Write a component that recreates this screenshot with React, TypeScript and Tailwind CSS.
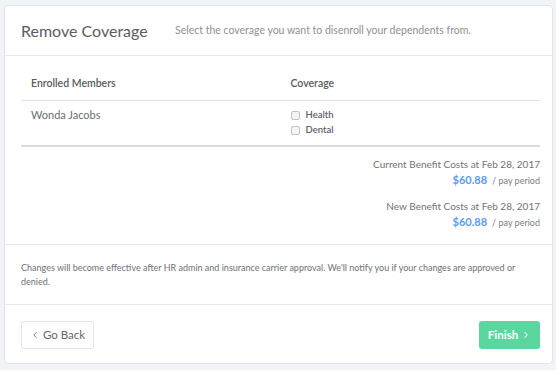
import { ChevronLeft, ChevronRight } from "lucide-react";

const CostLine = ({ label, amount }: { label: string; amount: string }) => (
  <div className="flex flex-col items-end">
    <div className="text-[10px] leading-[16px] text-[#707378]">{label}</div>
    <div className="flex items-baseline gap-[5px] leading-[16px]">
      <span className="text-[11px] font-bold text-[#5b9cf2]">{amount}</span>
      <span className="text-[9px] text-[#7b7d81]">/ pay period</span>
    </div>
  </div>
);

const Check = ({ label }: { label: string }) => (
  <label className="flex items-center gap-[6px] h-[15px]">
    <span className="w-[9px] h-[9px] rounded-[2px] border border-[#bfc2c6] bg-[#f3f4f6]" />
    <span className="text-[9.5px] font-semibold text-[#5d6068]">{label}</span>
  </label>
);

export default function App() {
  return (
    <div
      className="min-h-[370px] bg-[#f1f4f7] pt-[5px] pl-[4px] pr-[3px] pb-[7px]"
      style={{ fontFamily: "Lato, 'Open Sans', sans-serif" }}
    >
      <div className="bg-white rounded-[4px] border border-[#e1e4e8] flex flex-col">
        {/* header */}
        <div className="h-[50px] flex items-center pl-[16px] border-b border-[#e8eaed]">
          <h1 className="text-[16px] text-[#5a5d62] w-[154px]">Remove Coverage</h1>
          <p className="text-[10.5px] text-[#8d9095]">
            Select the coverage you want to disenroll your dependents from.
          </p>
        </div>

        {/* table + costs */}
        <div className="pl-[16px] pr-[12px] pt-[20px] pb-[13px]">
          <div className="grid grid-cols-2 border-b border-[#e1e3e6] pb-[8px]">
            <div className="pl-[10px] text-[10.5px] font-semibold text-[#585b60]">Enrolled Members</div>
            <div className="pl-[10px] text-[10.5px] font-semibold text-[#585b60]">Coverage</div>
          </div>
          <div className="grid grid-cols-2 border-b-2 border-[#d9dbdf] pt-[6px] pb-[7px]">
            <div className="pl-[10px] text-[11px] text-[#6a6d72] leading-[15px]">Wonda Jacobs</div>
            <div className="pl-[10px] pt-[1px] flex flex-col">
              <Check label="Health" />
              <Check label="Dental" />
            </div>
          </div>
          <div className="flex flex-col gap-[9px] pt-[9px]">
            <CostLine label="Current Benefit Costs at Feb 28, 2017" amount="$60.88" />
            <CostLine label="New Benefit Costs at Feb 28, 2017" amount="$60.88" />
          </div>
        </div>

        {/* notice */}
        <div className="border-y border-[#e8eaed] pl-[16px] pr-[20px] pt-[16px] pb-[15px]">
          <p className="text-[9px] leading-[14px] text-[#6e7176]">
            Changes will become effective after HR admin and insurance carrier approval. We'll notify you if your
            changes are approved or denied.
          </p>
        </div>

        {/* footer */}
        <div className="flex justify-between pl-[16px] pr-[12px] pt-[16px] pb-[14px]">
          <button className="h-[28px] w-[73px] rounded-[3px] border border-[#e1e4e8] flex items-center justify-center gap-[3px] text-[11.5px] text-[#62656a]">
            <ChevronLeft size={10} strokeWidth={2} />
            Go Back
          </button>
          <button className="h-[28px] w-[61px] rounded-[3px] bg-[#5cd69f] flex items-center justify-center gap-[3px] text-[11.5px] font-bold text-white">
            Finish
            <ChevronRight size={10} strokeWidth={2.5} />
          </button>
        </div>
      </div>
    </div>
  );
}
